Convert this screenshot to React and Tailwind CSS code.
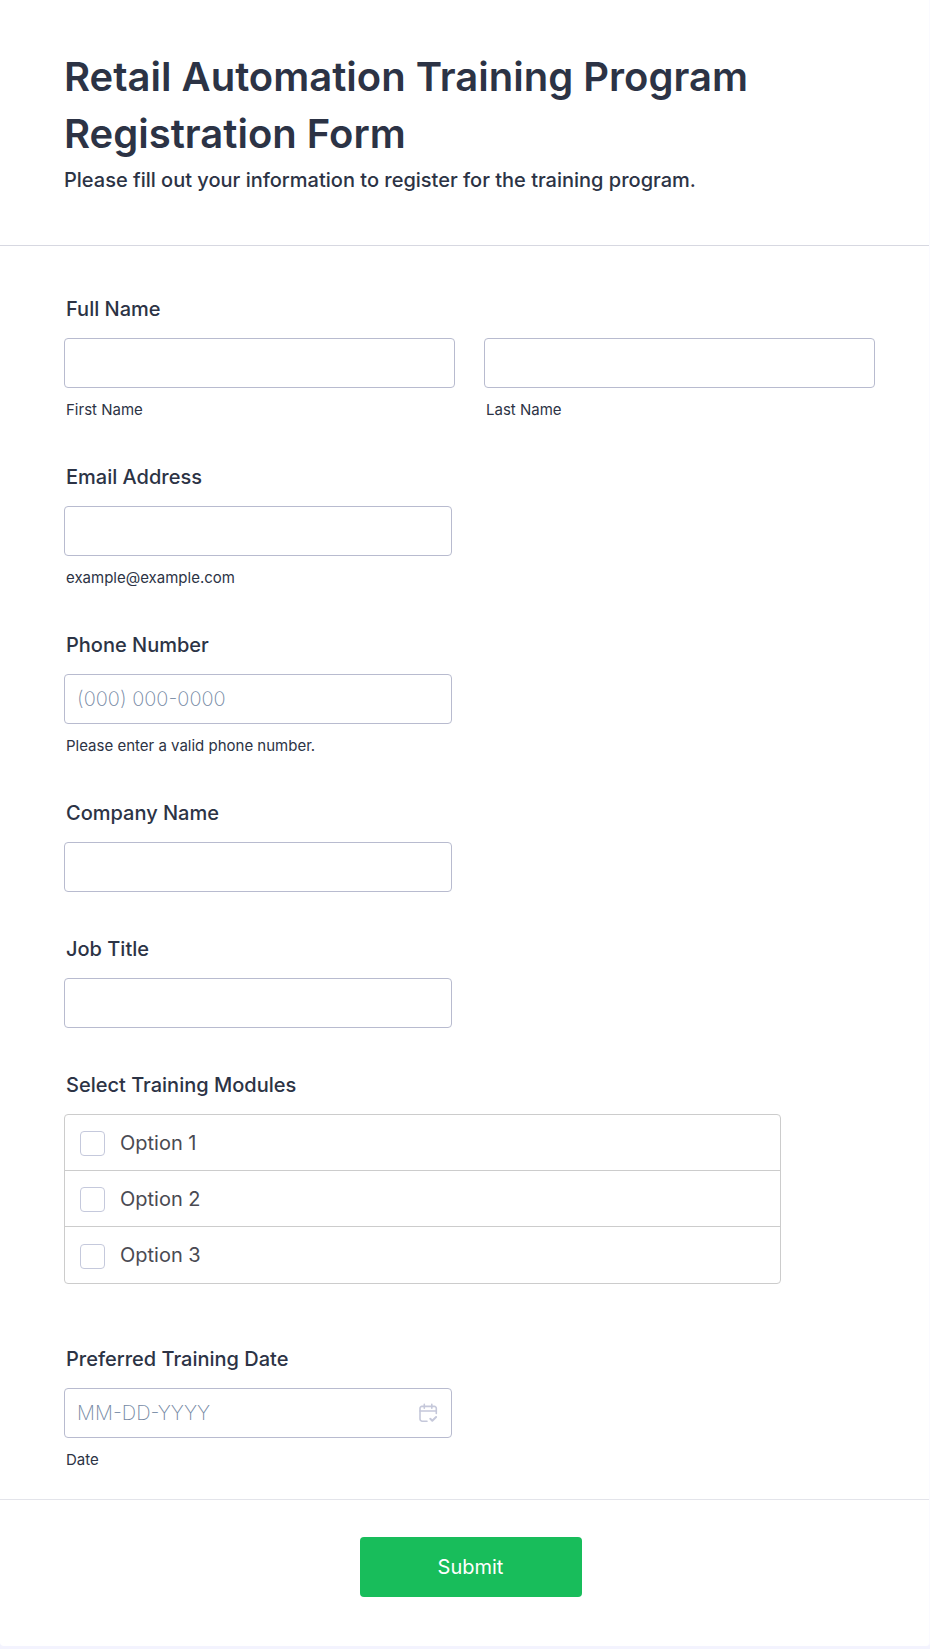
import React, { useState } from 'react';

const inputClass =
  'h-[50px] w-full rounded border border-[#b8bbcf] bg-white px-3 text-xl font-extralight text-[#2c3345] outline-none placeholder:text-[#7488a3] focus:border-[#2e69ff]';

const options = ['Option 1', 'Option 2', 'Option 3'];

const CalendarIcon = () => (
  <svg className="h-5 w-5" viewBox="0 0 20 20" fill="none" stroke="#c5c8da" strokeWidth="1.6" strokeLinecap="round" strokeLinejoin="round">
    <path d="M9 18.2H4.2A2.2 2.2 0 0 1 2 16V5.3A1.9 1.9 0 0 1 3.9 3.4H16.4A1.9 1.9 0 0 1 18.3 5.3V10.5" />
    <path d="M2 8H18.3" />
    <path d="M6.3 1.4V5.2M13.8 1.4V5.2" />
    <path d="M12.3 15.8L14.3 17.7L18.1 14" strokeWidth="2" />
  </svg>
);

const Label = ({ htmlFor, children }) => (
  <label htmlFor={htmlFor} className="mb-4 block pl-0.5 text-xl leading-[26px] font-medium">
    {children}
  </label>
);

const SubLabel = ({ htmlFor, children }) => (
  <label htmlFor={htmlFor} className="mt-3 block pl-0.5 text-[15px] leading-5">
    {children}
  </label>
);

const Field = ({ id, label, sub, type = 'text', placeholder, icon }) => (
  <div className="w-full max-w-[388px]">
    <Label htmlFor={id}>{label}</Label>
    <div className="relative">
      <input id={id} name={id} type={type} placeholder={placeholder} className={inputClass} />
      {icon && <span className="pointer-events-none absolute inset-y-0 right-3.5 flex items-center">{icon}</span>}
    </div>
    {sub && <SubLabel htmlFor={id}>{sub}</SubLabel>}
  </div>
);

const App = () => {
  const [selected, setSelected] = useState([]);

  const toggleOption = (option) => {
    setSelected((prev) => (prev.includes(option) ? prev.filter((o) => o !== option) : [...prev, option]));
  };

  const handleSubmit = (e) => {
    e.preventDefault();
  };

  return (
    <div className="min-h-screen bg-[#f3f3fe] font-['Inter',sans-serif] text-[#2c3345]">
      <form onSubmit={handleSubmit} className="rounded-b-sm border-r border-[#fafaff] bg-white">
        <header className="border-b border-[#d7d8e1] pt-12 pr-14 pb-[51px] pl-16">
          <h1 className="text-[40px] leading-[57px] font-semibold">
            Retail Automation Training Program Registration Form
          </h1>
          <p className="mt-1 text-xl leading-7 font-medium">
            Please fill out your information to register for the training program.
          </p>
        </header>

        <div className="flex flex-col gap-11 pt-[50px] pr-[54px] pb-[29px] pl-16">
          <fieldset>
            <legend className="mb-4 pl-0.5 text-xl leading-[26px] font-medium">Full Name</legend>
            <div className="grid grid-cols-2 gap-[29px]">
              <div>
                <input id="first-name" name="first-name" type="text" className={inputClass} />
                <SubLabel htmlFor="first-name">First Name</SubLabel>
              </div>
              <div>
                <input id="last-name" name="last-name" type="text" className={inputClass} />
                <SubLabel htmlFor="last-name">Last Name</SubLabel>
              </div>
            </div>
          </fieldset>

          <Field id="email" type="email" label="Email Address" sub="example@example.com" />
          <Field id="phone" type="tel" label="Phone Number" placeholder="(000) 000-0000" sub="Please enter a valid phone number." />
          <Field id="company" label="Company Name" />
          <Field id="job-title" label="Job Title" />

          <fieldset className="mb-[18px]">
            <legend className="mb-4 pl-0.5 text-xl leading-[26px] font-medium">Select Training Modules</legend>
            <div className="max-w-[717px] divide-y divide-[#cccccc] rounded border border-[#cccccc]">
              {options.map((option) => (
                <label key={option} className="flex h-14 items-center gap-[15px] pl-[15px] text-xl text-[#4a4a52]">
                  <input
                    type="checkbox"
                    checked={selected.includes(option)}
                    onChange={() => toggleOption(option)}
                    className="mt-0.5 h-[25px] w-[25px] appearance-none rounded border border-[#c5c9dc] bg-white checked:border-[#2e69ff] checked:bg-[#2e69ff]"
                  />
                  {option}
                </label>
              ))}
            </div>
          </fieldset>

          <Field id="date" label="Preferred Training Date" placeholder="MM-DD-YYYY" sub="Date" icon={<CalendarIcon />} />
        </div>

        <div className="flex justify-center border-t border-[#e3e4ea] pt-[37px] pr-13 pb-[49px] pl-16">
          <button type="submit" className="h-[60px] w-[222px] rounded bg-[#18bd5b] text-xl text-white">
            Submit
          </button>
        </div>
      </form>
    </div>
  );
};

export default App;
